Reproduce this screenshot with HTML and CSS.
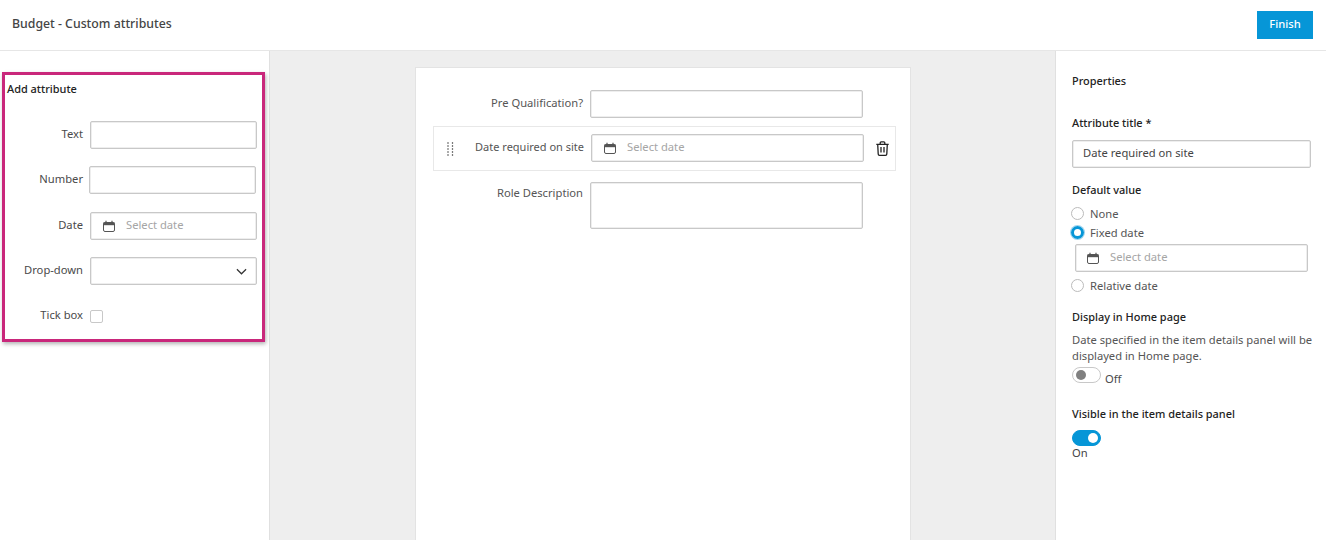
FILE: index.html
```html
<!DOCTYPE html>
<html lang="en">
<head>
<meta charset="utf-8">
<title>Budget - Custom attributes</title>
<link rel="stylesheet" href="styles.css">
</head>
<body>
<svg class="defs" width="0" height="0" aria-hidden="true">
  <symbol id="cal" viewBox="0 0 12 12">
    <path d="M1.500 2.500h9a1 1 0 0 1 1 1v6.500a1.500 1.500 0 0 1-1.500 1.500H2a1.500 1.500 0 0 1-1.500-1.500V3.500a1 1 0 0 1 1-1z" fill="none" stroke="#555" stroke-width="1"/>
    <path d="M.5 2.500h11v2.700H.5z" fill="#555"/>
    <path d="M3 .8v2M9 .8v2" stroke="#555" stroke-width="1.200"/>
  </symbol>
</svg>
<header class="topbar">
  <h1 class="title">Budget - Custom attributes</h1>
  <button class="finish">Finish</button>
</header>
<main class="workspace">
  <aside class="left">
    <section class="add-box">
      <h2 class="add-title">Add attribute</h2>
      <div class="add-row"><span class="lbl">Text</span><div class="field"></div></div>
      <div class="add-row add-row-number"><span class="lbl">Number</span><div class="field field-shift"></div></div>
      <div class="add-row"><span class="lbl">Date</span><div class="field date"><svg class="cal"><use href="#cal"/></svg><span class="ph">Select date</span></div></div>
      <div class="add-row"><span class="lbl">Drop-down</span><div class="field select"><svg class="chev" viewBox="0 0 12 7"><path d="M1 1l5 5 5-5" fill="none" stroke="#333" stroke-width="1.300"/></svg></div></div>
      <div class="add-row"><span class="lbl">Tick box</span><span class="check"></span></div>
    </section>
  </aside>
  <section class="center">
    <div class="card">
      <div class="form-row"><span class="flbl">Pre Qualification?</span><div class="field ffield"></div></div>
      <div class="selected">
        <svg class="grip" viewBox="0 0 7 14"><g fill="#333"><circle cx="1" cy="1" r=".75"/><circle cx="5.500" cy="1" r=".75"/><circle cx="1" cy="4" r=".75"/><circle cx="5.500" cy="4" r=".75"/><circle cx="1" cy="7" r=".75"/><circle cx="5.500" cy="7" r=".75"/><circle cx="1" cy="10" r=".75"/><circle cx="5.500" cy="10" r=".75"/><circle cx="1" cy="13" r=".75"/><circle cx="5.500" cy="13" r=".75"/></g></svg>
        <span class="slbl">Date required on site</span>
        <div class="field ffield date"><svg class="cal"><use href="#cal"/></svg><span class="ph">Select date</span></div>
        <svg class="trash" viewBox="0 0 13 15"><path d="M.3 3.300h12.400M4.200 3.300V1.800a1 1 0 0 1 1-1h2.600a1 1 0 0 1 1 1v1.500M1.700 3.300l.5 9.700a1.300 1.300 0 0 0 1.300 1.300h6a1.300 1.300 0 0 0 1.300-1.300l.5-9.700M5 6v5.500M8 6v5.500" fill="none" stroke="#222" stroke-width="1.300"/></svg>
      </div>
      <div class="form-row role"><span class="flbl">Role Description</span><div class="field ffield area"></div></div>
    </div>
  </section>
  <aside class="right">
    <h2 class="prop-title">Properties</h2>
    <h3 class="sub attr">Attribute title *</h3>
    <div class="field pfield">Date required on site</div>
    <h3 class="sub def">Default value</h3>
    <div class="radio-row"><span class="radio"></span>None</div>
    <div class="radio-row"><span class="radio on"></span>Fixed date</div>
    <div class="field date pdate"><svg class="cal"><use href="#cal"/></svg><span class="ph">Select date</span></div>
    <div class="radio-row rel"><span class="radio"></span>Relative date</div>
    <h3 class="sub home">Display in Home page</h3>
    <p class="desc">Date specified in the item details panel will be displayed in Home page.</p>
    <div class="toggle-off-row"><span class="toggle"></span><span class="off">Off</span></div>
    <h3 class="sub vis">Visible in the item details panel</h3>
    <span class="toggle on"></span>
    <div class="on-lbl">On</div>
  </aside>
</main>
</body>
</html>
```
FILE: styles.css
```css
* { box-sizing: border-box; }
html, body { margin: 0; height: 100%; }
body {
  width: 1326px;
  height: 540px;
  overflow: hidden;
  background: #fff;
  color: #4a4a4a;
  font: 11.2px/16px "Noto Sans", "Open Sans", sans-serif;
  display: flex;
  flex-direction: column;
}
.defs { position: absolute; }
h1, h2, h3, p { margin: 0; font-weight: 500; }

.topbar {
  height: 51px;
  flex: none;
  border-bottom: 1px solid #e6e6e6;
  display: flex;
  align-items: flex-start;
  justify-content: space-between;
  padding: 11px 13px 0 12px;
}
.title { font-size: 12.3px; line-height: 26px; color: #444; }
.finish {
  width: 56px;
  height: 28px;
  border: 0;
  background: #0696d7;
  color: #fff;
  font: 500 11.2px/16px "Noto Sans", sans-serif;
  padding: 0 0 2px;
}

.workspace { flex: 1; display: flex; min-height: 0; }
.left { width: 270px; flex: none; background: #fff; border-right: 1px solid #e0e0e0; padding: 21px 0 0 2px; }
.center { flex: 1; background: #eeeeee; padding: 16px 144px 0 145px; }
.right { width: 271px; flex: none; background: #fff; border-left: 1px solid #e0e0e0; padding: 22px 12px 0 16px; }

.add-box {
  width: 263px;
  height: 270px;
  border: 3px solid #c9277b;
  box-shadow: 1px 2px 4px rgba(0,0,0,.3);
  padding: 6px 5px 0 2px;
}
.add-title { font-size: 10.95px; line-height: 16px; color: #222; margin-bottom: 24px; }
.add-row { display: flex; align-items: center; height: 28px; margin-bottom: 17px; }
.add-row-number { margin-bottom: 18px; }
.lbl { width: 74px; margin-left: 2px; text-align: right; margin-top: -2px; white-space: nowrap; }
.add-row .field { margin-left: 7px; width: 167px; height: 28px; }
.add-row .field-shift { margin-left: 6px; }

.field {
  border: 1px solid #c8c8c8;
  border-radius: 2px;
  box-shadow: inset 0 0 0 .5px #ddd;
  background: #fff;
}
.date { display: flex; align-items: center; padding-left: 12px; }
.cal { width: 12px; height: 12px; flex: none; margin-right: 11px; }
.ph { color: #a5a5a5; margin-top: -2px; }
.select { display: flex; align-items: center; justify-content: flex-end; padding-right: 9px; }
.chev { width: 11px; height: 7px; }
.check { width: 13px; height: 13px; margin-left: 7px; border: 1px solid #c8c8c8; border-radius: 2px; }

.card {
  width: 496px;
  height: 480px;
  background: #fff;
  border: 1px solid #e3e3e3;
  padding: 22px 17px 0 17px;
}
.form-row { display: flex; align-items: flex-start; width: 430px; }
.flbl { width: 150px; text-align: right; color: #555; padding-top: 5px; }
.form-row .ffield { margin-left: 7px; width: 273px; height: 28px; }
.selected {
  width: 463px;
  height: 45px;
  margin-top: 8px;
  border: 1px solid #e8e8e8;
  display: flex;
  align-items: center;
  padding-left: 13px;
}
.grip { width: 7px; height: 14px; flex: none; }
.slbl { width: 109px; margin-left: 21px; font-size: 11px; white-space: nowrap; color: #555; text-align: right; margin-top: -4px; }
.selected .ffield { margin: -2px 0 0 7px; width: 273px; height: 28px; flex: none; }
.trash { width: 13px; height: 15px; margin-left: 12px; flex: none; }
.role { margin-top: 11px; }
.role .flbl { padding-top: 3px; }
.form-row .area { height: 47px; }

.prop-title { font-size: 10.95px; color: #222; line-height: 16px; }
.sub { font-size: 10.95px; line-height: 16px; color: #222; }
.attr { margin-top: 26px; }
.pfield { width: 239px; height: 28px; margin-top: 9px; padding: 4px 10px; color: #444; }
.def { margin-top: 14px; }
.radio-row { display: flex; align-items: center; height: 19px; color: #555; }
.def + .radio-row { margin-top: 6px; }
.radio { width: 13px; height: 13px; margin-left: -1px; border: 1px solid #bbb; border-radius: 50%; margin-right: 6px; flex: none; }
.radio.on { border: 3px solid #0696d7; box-shadow: 0 0 0 1px #9fd4ee; }
.pdate { width: 233px; height: 28px; margin: 2px 0 0 3px; padding-left: 11px; }
.rel { margin-top: 4px; }
.home { margin-top: 14px; }
.desc { margin-top: 7px; font-weight: 400; line-height: 16px; width: 242px; color: #555; }
.toggle-off-row { display: flex; align-items: flex-end; margin-top: 3px; height: 20px; }
.toggle {
  display: block;
  position: relative;
  width: 29px;
  height: 16px;
  border: 1px solid #c8c8c8;
  border-radius: 8px;
  background: #fff;
}
.toggle::after {
  content: "";
  position: absolute;
  left: 3px;
  top: 2px;
  width: 10px;
  height: 10px;
  border-radius: 50%;
  background: #808080;
}
.toggle.on { background: #0696d7; border-color: #0696d7; }
.toggle.on::after { left: auto; right: 2px; background: #fff; }
.toggle-off-row .toggle { margin-bottom: 4px; }
.off { margin-left: 4px; line-height: 16px; }
.vis { margin-top: 19px; }
.vis + .toggle { margin-top: 8px; }
.on-lbl { margin-top: -1px; color: #444; }
```
